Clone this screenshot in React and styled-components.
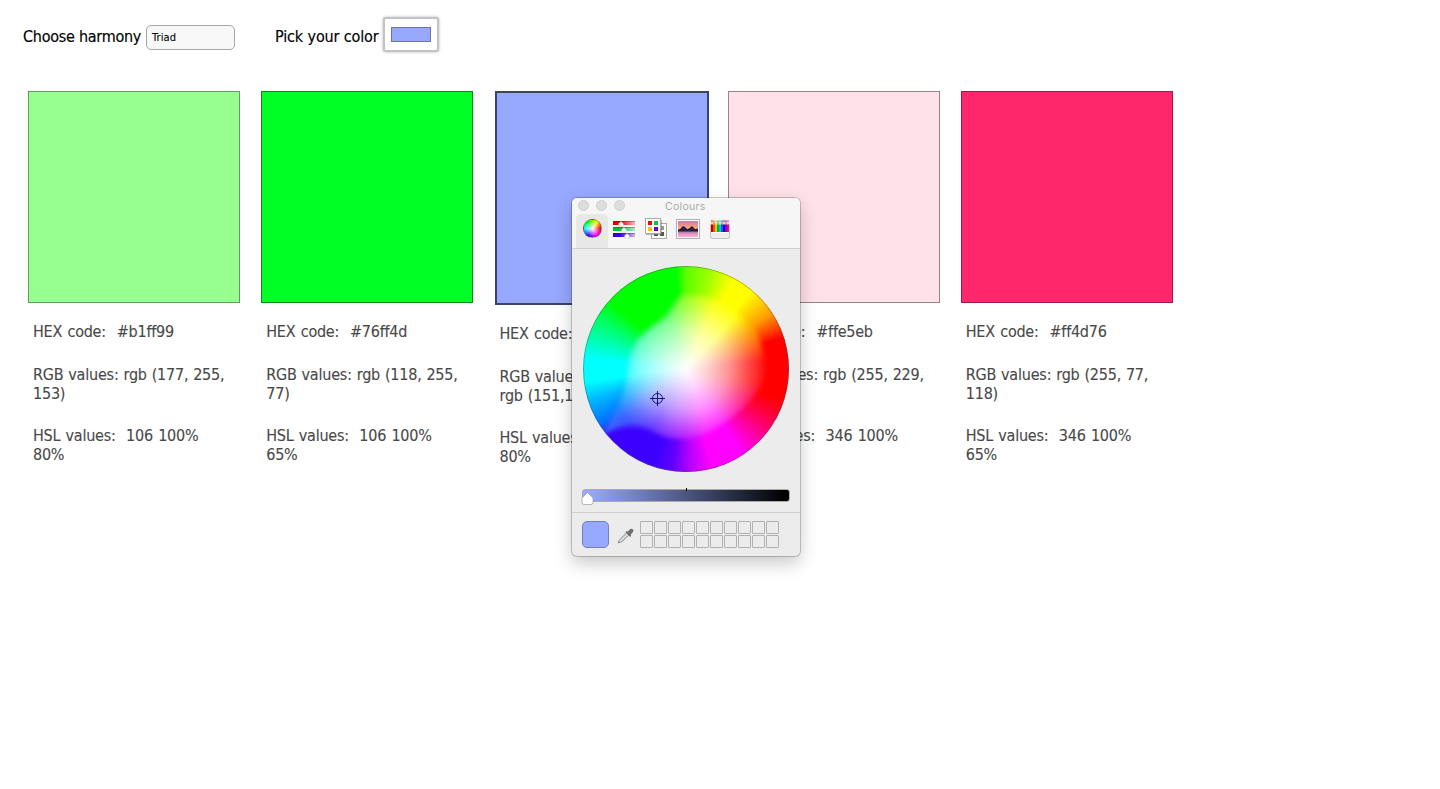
import React from 'react';
import styled, { createGlobalStyle, css } from 'styled-components';

const Global = createGlobalStyle`
  * { box-sizing: border-box; }
  body { margin: 0; background: #fff; color: #000; font: 16px/19px 'DejaVu Sans Condensed', 'DejaVu Sans', sans-serif; font-stretch: condensed; overflow: hidden; }
`;
const Page = styled.main`height: 789px; overflow: hidden;`;
const Controls = styled.header`display: flex; height: 91px; padding: 17px 0 0 23px;`;
const Field = styled.label`display: flex; align-items: center; height: 39px; width: ${p => p.$width}px; gap: 5px;`;
const FieldText = styled.span`width: ${p => p.$width}px; white-space: nowrap; letter-spacing: ${p => p.$track}px; -webkit-text-stroke: .15px currentColor;`;
const Select = styled.span`width: 89px; height: 25px; margin-top: 2px; padding-left: 5px; border: 1px solid #a6a6a6; border-radius: 5px; background: #f8f8f8; font-size: 11px; line-height: 24px; letter-spacing: .1px; -webkit-text-stroke: .1px currentColor;`;
const ColorInput = styled.span`width: 52px; height: 31px; margin-top: -4px; padding: 8px 6px; background: #fff; border-radius: 1px; box-shadow: 0 0 0 2px #c2c2c7, 0 0 3px 2px #b5b5ba;`;
const InputSwatch = styled.span`display: block; width: 40px; height: 15px; border: 1px solid #777; background: #97a8ff;`;
const Palette = styled.section`display: flex; padding-left: 28px;`;
const Card = styled.article`width: ${p => p.$selected ? 233 : 233.25}px; flex: none;`;
const Swatch = styled.div`width: ${p => p.$selected ? 214 : 212}px; height: ${p => p.$selected ? 214 : 212}px; background: ${p => p.$color}; border: ${p => p.$selected ? 2 : 1}px solid ${p => p.$border};`;
const Details = styled.div`padding: 19px 0 0 5px; color: #484848; white-space: pre; -webkit-text-stroke: .1px currentColor;`;
const Value = styled.p`margin: 0 0 ${p => p.$gap}px; letter-spacing: ${p => p.$track}px; word-spacing: ${p => p.$word}px;`;
const Panel = styled.aside`position: absolute; left: 572px; top: 198px; width: 228px; height: 358px; background: #ececec; border-radius: 5px; box-shadow: 0 0 0 1px rgba(0,0,0,.2), 0 7px 18px rgba(0,0,0,.22);`;
const PanelHead = styled.header`height: 51px; background: #f6f6f6; border-radius: 5px 5px 0 0; border-bottom: 1px solid #d0d0d0;`;
const TitleBar = styled.div`display: flex; align-items: center; height: 16px; padding: 0 0 1px 6px; gap: 7px;`;
const Light = styled.i`width: 11px; height: 11px; border: 1px solid #cecece; border-radius: 50%; background: #ddd;`;
const Title = styled.span`margin-left: 33px; padding-top: 2px; color: #aaa; font: 10.5px/14px Inter, sans-serif; letter-spacing: .3px;`;
const Tools = styled.nav`display: flex; height: 34px; padding-left: 4px;`;
const Tool = styled.span`width: 32px; height: 34px; border-radius: 5px 5px 0 0; ${p => p.$active && css`background: #e8e8e8;`}`;
const ToolIcon = styled.svg`display: block;`;
const MiniWheel = styled.span`
  display: block; width: 19px; height: 19px; margin: 5px 0 0 7px; border: 1px solid rgba(90,90,90,.45); border-radius: 50%;
  background: radial-gradient(circle, #fff 0, rgba(255,255,255,.65) 25%, transparent 65%), conic-gradient(#6f0, #ff0 35deg, #f00 85deg, #f0f 150deg, #4000ff 210deg, #0ff 270deg, #0f0 325deg, #6f0);
`;
const Wheel = styled.div`
  position: relative; width: 206px; height: 206px; margin: 17px 0 0 11px; border-radius: 50%; overflow: hidden;
  background: conic-gradient(#5cff00 0deg, #a0ff00 14deg, #ff0 28deg 40deg, #ff9c00 57deg, #f00 72deg 108deg, #ff0060 124deg, #f0f 146deg 165deg, #b400ff 178deg, #6000ff 188deg, #3c00ff 199deg 230deg, #0070ff 237deg, #00b4ff 251deg, #0ff 263deg 276deg, #00ffb8 287deg, #00ff62 300deg, #0f0 312deg 354deg, #5cff00 360deg);
`;
const WheelBlend = styled.span`position: absolute; inset: 0; filter: blur(2.6px);`;
const WheelCore = styled.span`
  position: absolute; inset: 0;
  clip-path: path('M99 29C112 28 130 30 142 39C156 49 175 58 178 78C183 94 184 110 175 124C166 139 151 151 138 159C126 167 114 173 99 173C84 173 76 169 65 163C48 157 30 162 18 170C30 150 42 128 45 105C46 94 48 83 55 74C63 63 76 56 82 51C88 45 90 38 99 29Z');
  background: radial-gradient(circle, #fff 0, rgba(255,255,255,.84) 18px, rgba(255,255,255,.56) 42px, rgba(255,255,255,.22) 63px, transparent 78px), conic-gradient(#8aff10, #ff0 24deg 44deg, #ff9a00 60deg, #ff1212 84deg 100deg, #ff0070 120deg, #f0f 146deg 160deg, #a800ff 182deg, #4c18ff 210deg, #3c60ff 232deg, #00b8ff 250deg, #0ff 264deg 274deg, #00ffb0 292deg, #00ff58 320deg, #2f3 342deg, #8aff10 360deg);
`;
const WheelEdge = styled.span`position: absolute; inset: 0; border: 1px solid rgba(70,80,80,.45); border-radius: 50%;`;
const Cursor = styled.svg`position: absolute; left: 66px; top: 124px;`;
const SliderBox = styled.div`position: relative; height: 23px; margin: 17px 10px 0;`;
const Track = styled.div`height: 13px; border: 1px solid #aaa; border-radius: 3px; background: linear-gradient(90deg,#97a8ff 3%,#000 98%);`;
const SliderMarks = styled.svg`position: absolute; left: -2px; top: -1px;`;
const PanelFoot = styled.footer`display: flex; height: 44px; border-top: 1px solid #cfcfcf; padding: 8px 0 0 10px;`;
const Current = styled.span`width: 27px; height: 27px; border: 1px solid #7380c0; border-radius: 5px; background: #97a8ff;`;
const Dropper = styled.svg`margin: 6px 5px 0 8px;`;
const Slots = styled.div`display: grid; grid-template-columns: repeat(10, 13px); grid-template-rows: repeat(2,13px); gap: 1px;`;
const Slot = styled.i`border: 1px solid #b1b1b1; border-radius: 1px;`;

const cards = [
  ['#96ff90', '#5e9e5a', ['HEX code:  #b1ff99', 'RGB values: rgb (177, 255,\n153)', 'HSL values:  106 100%\n80%']],
  ['#00ff24', '#09881a', ['HEX code:  #76ff4d', 'RGB values: rgb (118, 255,\n77)', 'HSL values:  106 100%\n65%']],
  ['#97a8ff', '#394468', ['HEX code:  #97a8ff', 'RGB values:\nrgb (151,168,255)', 'HSL values:  230 100%\n80%']],
  ['#ffe1e9', '#9c8188', ['HEX code:  #ffe5eb', 'RGB values: rgb (255, 229,\n235)', 'HSL values:  346 100%\n95%']],
  ['#ff276b', '#9d1b47', ['HEX code:  #ff4d76', 'RGB values: rgb (255, 77,\n118)', 'HSL values:  346 100%\n65%']],
];
const spacing = [[24, -.26, 1.2], [23, -.2, .5], [0, -.25, 1]];
const pencils = ['#e00000', '#ff5a20', '#e8e000', '#00c838', '#00d8e8', '#0060ff', '#3000d8', '#9800d8', '#f000a0'];

function SliderIcon() {
  return <ToolIcon width="32" height="34">
    <defs>{['#e00000', '#00c030', '#3000e0'].map((c, i) => <linearGradient key={c} id={`bar${i}`}><stop offset=".3" stopColor={c} /><stop offset="1" stopColor={c} stopOpacity=".25" /></linearGradient>)}</defs>
    {[[7, 13], [13, 16], [19, 19]].map(([y, x], i) => <g key={y}>
      <rect x="5" y={y} width="22" height="4" fill={`url(#bar${i})`} />
      <path d={`M5 ${y + .5}h22`} stroke="#500" strokeOpacity=".3" />
      <path d={`M${x} ${y + .4}L${x + 2.5} ${y + 2.8}V${y + 5}H${x - 2.5}V${y + 2.8}Z`} fill="#fff" stroke="#aaa" strokeWidth=".4" />
    </g>)}
  </ToolIcon>;
}

function PaletteIcon() {
  return <ToolIcon width="32" height="34">
    <rect x="11.5" y="9.5" width="15" height="15" fill="#fff" stroke="#aaa" />
    <path d="M20 12h4v4h-4z" fill="#999" /><path d="M14 18h4v4h-4zM20 18h4v4h-4z" fill="#555" />
    <path d="M6 20.5h15.5V6" fill="none" stroke="#777" strokeOpacity=".5" />
    <rect x="5.5" y="4.5" width="15" height="15" fill="#fff" stroke="#aaa" />
    <path d="M8 7h4v4H8z" fill="#f00" /><path d="M14 7h4v4h-4z" fill="#00c83c" />
    <path d="M8 13h4v4H8z" fill="#ffc000" /><path d="M14 13h4v4h-4z" fill="#50e" />
  </ToolIcon>;
}

function PictureIcon() {
  return <ToolIcon width="32" height="34">
    <defs>
      <linearGradient id="sky" x2="0" y2="1"><stop stopColor="#c47bb0" /><stop offset=".6" stopColor="#ff9b80" /><stop offset="1" stopColor="#ffc880" /></linearGradient>
      <linearGradient id="lake" x2="0" y2="1"><stop stopColor="#a06a9c" /><stop offset=".5" stopColor="#e49ac4" /><stop offset="1" stopColor="#ffb0cc" /></linearGradient>
    </defs>
    <rect x="4.5" y="5.5" width="23" height="19" fill="#fff" stroke="#b0b0b0" />
    <path d="M6 7h20v10H6z" fill="url(#sky)" /><path d="M6 17h20v6H6z" fill="url(#lake)" />
    <path d="M6 15.5l2-.5 3-3 2 1 2 2 2-.5 3-2.5 3 3 3-.5v3H6z" fill="#28203e" />
  </ToolIcon>;
}

function PencilIcon() {
  return <ToolIcon width="32" height="34">
    <path d="M7 8h18v13H7z" fill="#f3ead8" />
    {pencils.map((c, i) => <g key={c}>
      <path d={`M${7 + i * 2} 11V9l1-2 1 2v2z`} fill={i % 2 ? '#c8ac80' : '#e8d2aa'} />
      <path d={`M${7.2 + i * 2} 7.8l.8-2.3 .8 2.3z`} fill={c} />
      <rect x={7 + i * 2} y="10.5" width="2" height="8" fill={c} />
      <path d={`M${7.2 + i * 2} 11v7`} stroke="#000" strokeOpacity=".35" strokeWidth=".5" />
    </g>)}
    <path d="M6.5 18.5h19v4.5q0 1.5-1.5 1.5H8q-1.5 0-1.5-1.5z" fill="#eee" stroke="#b8b8b8" strokeWidth=".8" />
    <path d="M6.5 10v9M25.5 10v9" stroke="#b8b8b8" strokeWidth=".8" />
    <path d="M7 18.5h18" stroke="#fff" />
  </ToolIcon>;
}

export default function App() {
  return <Page><Global />
    <Controls>
      <Field $width={252}><FieldText $width={118} $track={-.26}>Choose harmony</FieldText><Select>Triad</Select></Field>
      <Field $width={170}><FieldText $width={105} $track={-.13}>Pick your color</FieldText><ColorInput><InputSwatch /></ColorInput></Field>
    </Controls>
    <Palette>{cards.map(([color, border, values], i) => <Card key={color} $selected={i === 2}>
      <Swatch $selected={i === 2} $color={color} $border={border} />
      <Details>{values.map((v, j) => <Value key={j} $gap={spacing[j][0]} $track={spacing[j][1]} $word={spacing[j][2]}>{v}</Value>)}</Details>
    </Card>)}</Palette>
    <Panel>
      <PanelHead>
        <TitleBar><Light /><Light /><Light /><Title>Colours</Title></TitleBar>
        <Tools>
          <Tool $active><MiniWheel /></Tool>
          <Tool><SliderIcon /></Tool>
          <Tool><PaletteIcon /></Tool>
          <Tool><PictureIcon /></Tool>
          <Tool><PencilIcon /></Tool>
        </Tools>
      </PanelHead>
      <Wheel>
        <WheelBlend><WheelCore /></WheelBlend><WheelEdge />
        <Cursor width="16" height="16" fill="none" stroke="#15157c"><circle cx="8.5" cy="8.5" r="5" /><path d="M1 8.5h15M8.5 1v15" /></Cursor>
      </Wheel>
      <SliderBox>
        <Track />
        <SliderMarks width="212" height="20">
          <path d="M106.5 -1v4" stroke="#000" />
          <path d="M7.5 4.5Q10 7 12.5 9.5Q13 10 13 11V14.5Q13 16.5 11 16.5H4Q2 16.5 2 14.5V11Q2 10 2.5 9.5Q5 7 7.5 4.5Z" fill="#fff" stroke="#999" strokeWidth=".7" />
        </SliderMarks>
      </SliderBox>
      <PanelFoot>
        <Current />
        <Dropper width="18" height="18" viewBox="0 0 18 18">
          <path d="M9.7 5.7L3.5 12Q1.6 13.6 1.2 15.8Q3.5 15.6 5.5 14L12 7.8" fill="#ddd" stroke="#888" />
          <path d="M8.4 5.1l1.1-1.1 1.2.8 2-2.2q1.7-1.7 3.2-.4 1.4 1.6-.3 3.3L13.5 7.7l.8 1.1-1.2 1.2z" fill="#6e6e6e" />
        </Dropper>
        <Slots>{Array.from({ length: 20 }, (_, i) => <Slot key={i} />)}</Slots>
      </PanelFoot>
    </Panel>
  </Page>;
}
